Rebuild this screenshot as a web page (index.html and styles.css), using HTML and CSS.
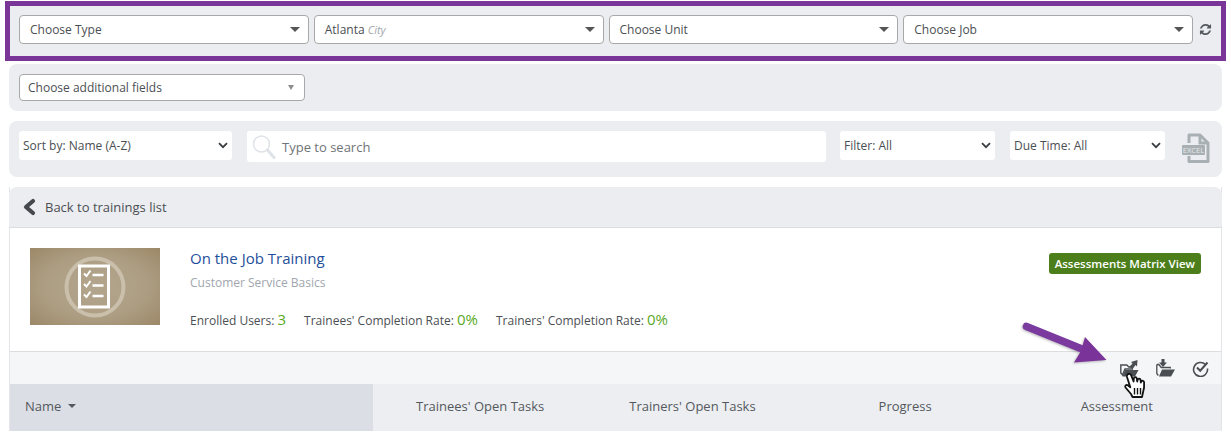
FILE: index.html
```html
<!DOCTYPE html>
<html lang="en">
<head>
<meta charset="utf-8">
<title>On the Job Training</title>
<link rel="stylesheet" href="styles.css">
</head>
<body>
<section class="filters">
  <div class="pick"><span>Choose Type</span><i class="caret"></i></div>
  <div class="pick"><span>Atlanta <em>City</em></span><i class="caret"></i></div>
  <div class="pick"><span>Choose Unit</span><i class="caret"></i></div>
  <div class="pick"><span>Choose Job</span><i class="caret"></i></div>
  <div class="refresh">
    <svg width="13" height="13" viewBox="0 0 1792 1792"><path fill="#555a5e" d="M1639 1056q0 5-1 7-64 268-268 434.5t-478 166.5q-146 0-282.5-55t-243.5-157l-129 129q-19 19-45 19t-45-19-19-45v-448q0-26 19-45t45-19h448q26 0 45 19t19 45-19 45l-137 137q71 66 161 102t187 36q134 0 250-65t186-179q11-17 53-117 8-23 30-23h192q13 0 22.5 9.5t9.5 22.5zm25-800v448q0 26-19 45t-45 19h-448q-26 0-45-19t-19-45 19-45l138-138q-148-137-349-137-134 0-250 65t-186 179q-11 17-53 117-8 23-30 23h-199q-13 0-22.5-9.5t-9.5-22.5v-7q65-268 270-434.5t480-166.5q146 0 284 55.5t245 156.5l130-129q19-19 45-19t45 19 19 45z"/></svg>
  </div>
</section>

<section class="panel extra">
  <div class="pick pick-small"><span>Choose additional fields</span><i class="caret caret-light"></i></div>
</section>

<section class="panel tools">
  <div class="drop drop-sort"><span>Sort by: Name (A-Z)</span><svg class="chev" width="10" height="7" viewBox="0 0 10 7"><path d="M1 1.2l4 4 4-4" fill="none" stroke="#3a3d40" stroke-width="1.8"/></svg></div>
  <div class="search">
    <svg width="24" height="26" viewBox="0 0 24 26"><circle cx="9.5" cy="10" r="8" fill="none" stroke="#dfe2e6" stroke-width="1.5"/><path d="M15.5 16l6.5 7.5" stroke="#dfe2e6" stroke-width="3" stroke-linecap="round"/></svg>
    <span>Type to search</span>
  </div>
  <div class="drop drop-filter"><span>Filter: All</span><svg class="chev" width="10" height="7" viewBox="0 0 10 7"><path d="M1 1.2l4 4 4-4" fill="none" stroke="#3a3d40" stroke-width="1.8"/></svg></div>
  <div class="drop drop-due"><span>Due Time: All</span><svg class="chev" width="10" height="7" viewBox="0 0 10 7"><path d="M1 1.2l4 4 4-4" fill="none" stroke="#3a3d40" stroke-width="1.8"/></svg></div>
  <div class="excel">
    <svg width="30" height="30" viewBox="0 0 30 30"><path d="M7 10V2h11l8 8v18.500H7V23" fill="none" stroke="#a9b0b3" stroke-width="3" stroke-linejoin="round"/><path d="M18 2v8h8" fill="none" stroke="#a9b0b3" stroke-width="3"/></svg>
    <b>EXCEL</b>
  </div>
</section>

<section class="card">
  <header class="back">
    <svg width="14" height="18" viewBox="0 0 14 18"><path d="M11 3L4 9l7 6" fill="none" stroke="#45494d" stroke-width="4.200" stroke-linecap="round" stroke-linejoin="round"/></svg>
    <span>Back to trainings list</span>
  </header>
  <div class="info">
    <div class="thumb">
      <svg width="64" height="64" viewBox="0 0 64 64">
        <circle cx="32" cy="32" r="28.500" fill="none" stroke="#c9bfab" stroke-width="4"/>
        <rect x="16.500" y="11" width="29" height="41" fill="none" stroke="#fff" stroke-width="3"/>
        <path d="M21 18.500l2.500 2.500 4-5.500M21 29l2.500 2.500 4-5.500M21 39.500l2.500 2.500 4-5.500" fill="none" stroke="#fff" stroke-width="2"/>
        <path d="M29.500 20h11M29.500 30.500h11M29.500 41h11" stroke="#fff" stroke-width="2.600"/>
      </svg>
    </div>
    <div class="meta">
      <h1>On the Job Training</h1>
      <p class="sub">Customer Service Basics</p>
      <p class="stats">
        <span class="first">Enrolled Users: <strong>3</strong></span>
        <span class="second">Trainees' Completion Rate: <strong>0%</strong></span>
        <span>Trainers' Completion Rate: <strong>0%</strong></span>
      </p>
    </div>
    <a class="matrix">Assessments Matrix View</a>
  </div>
  <div class="actions">
    <svg width="19" height="17" viewBox="0 0 19 17"><path d="M.8 5h6l2 2h3.500v2H5L2.500 15 .8 13z" fill="none" stroke="#4a4e52" stroke-width="1.400"/><path d="M5 10h13.500L15 16.500H2.500z" fill="#4a4e52"/><path d="M9 7l3.500-3.500L11 2l6.500-2-.5 6.500-1.500-1.500L13 8.500z" fill="#4a4e52"/></svg>
    <svg width="19" height="18" viewBox="0 0 19 18"><path d="M.8 5.500h2l2.500 3h9v1" fill="none" stroke="#4a4e52" stroke-width="1.300"/><path d="M.8 5.500v9l1.500 2" fill="none" stroke="#4a4e52" stroke-width="1.300"/><path d="M6 10.500h13L15 17.500H3z" fill="#4a4e52"/><path d="M5.500 0h3v3.500H11L7 8 3 3.500h2.500z" fill="#4a4e52"/></svg>
    <svg width="17" height="17" viewBox="0 0 17 17"><path d="M13.500 4.500A7 7 0 1 0 15.500 8.500" fill="none" stroke="#4a4e52" stroke-width="1.600"/><path d="M5 7.500l3.200 3.200L15.500 2.500" fill="none" stroke="#4a4e52" stroke-width="2"/></svg>
  </div>
  <div class="thead">
    <div class="th-name">Name <i class="sort"></i></div>
    <div class="th th1">Trainees' Open Tasks</div>
    <div class="th th2">Trainers' Open Tasks</div>
    <div class="th th3">Progress</div>
    <div class="th th4">Assessment</div>
  </div>
</section>

<svg class="arrow" width="90" height="46" viewBox="0 0 90 46"><path d="M4.500 4.500L60 27" stroke="#7a3a9e" stroke-width="7.500" stroke-linecap="round"/><path d="M63 15L84.500 38 52 40.500 59 29z" fill="#7a3398"/></svg>
<svg class="hand" width="26" height="27" viewBox="0 0 26 27"><path d="M4.500 2.500c1.300-1.300 3-.8 3.600.7l2.500 6.300.2-3c.2-1.800 2.800-1.800 3 0l.4 3 .4-1.800c.4-1.600 2.700-1.400 2.900.2l.3 2.600.5-1c.6-1.300 2.700-.9 2.800.7.200 3 .1 6.500-.9 9.300l-1.200 5.500H9.500L8 22 2.500 15.500c-1-1.500.8-3.200 2.300-2.200l2.500 1.900L4 5c-.2-1 0-1.900.5-2.500z" fill="#fff" stroke="#111" stroke-width="1.800" stroke-linejoin="round"/><path d="M11.500 16v6.500M14.500 16v6.500M17.500 16v6.500" stroke="#111" stroke-width="1.400"/></svg>
</body>
</html>
```
FILE: styles.css
```css
* { box-sizing: border-box; }
html, body { margin: 0; padding: 0; }
body {
  position: relative;
  width: 1231px;
  height: 438px;
  overflow: hidden;
  background: #fff;
  font-family: "Open Sans", "Liberation Sans", sans-serif;
  font-size: 12px;
  color: #45494d;
}
.filters {
  display: flex;
  gap: 5px;
  height: 60px;
  margin: 1px 5px 0;
  padding: 9px 0 0 9px;
  border: 5px solid #7a3598;
  background: #ecedf1;
}
.pick {
  display: flex;
  flex: 1 1 0;
  align-items: center;
  justify-content: space-between;
  height: 29px;
  padding: 0 8px 0 10px;
  border: 1px solid #a8a8a8;
  border-radius: 4px;
  background: #fff;
  color: #4b4f53;
}
.pick em { font-size: 11px; color: #a3a7ab; font-style: italic; }
.caret {
  width: 0;
  height: 0;
  border-left: 5px solid transparent;
  border-right: 5px solid transparent;
  border-top: 5px solid #555;
}
.caret-light { border-left-width: 3.500px; border-right-width: 3.500px; border-top-color: #8d8d8d; margin-right: 2px; }
.refresh { display: flex; flex: 0 0 23px; height: 29px; align-items: center; justify-content: flex-start; padding-left: 1px; }
.panel {
  display: flex;
  margin: 0 9px;
  border-radius: 8px;
  background: #ecedf1;
}
.extra { height: 47px; margin-top: 3px; padding: 10px; }
.pick-small { flex: 0 0 286px; height: 27px; padding: 0 8px; }
.tools { height: 56px; margin-top: 10px; padding: 10px 10px 0; align-items: flex-start; }
.drop {
  display: flex;
  align-items: center;
  justify-content: space-between;
  height: 29px;
  padding: 0 4px 0 4px;
  border-radius: 3px;
  background: #fff;
  color: #4b4f53;
}
.drop-sort { flex: 0 0 213px; }
.drop-filter { flex: 0 0 155px; margin-left: 14px; }
.drop-due { flex: 0 0 155px; margin-left: 15px; }
.search {
  display: flex;
  flex: 0 0 579px;
  align-items: center;
  gap: 6px;
  height: 31px;
  margin-left: 15px;
  padding-left: 5px;
  border-radius: 3px;
  background: #fff;
  font-size: 13px;
  color: #6f7478;
}
.excel { position: relative; width: 30px; height: 30px; margin: 2px 0 0 17px; }
.excel svg { display: block; }
.excel b {
  position: absolute;
  left: 0;
  top: 12px;
  width: 23px;
  border-radius: 1px;
  background: #a9b0b3;
  color: #e4e7e9;
  font-size: 7.500px;
  line-height: 10px;
  font-weight: 400;
  text-align: center;
}
.card {
  margin: 10px 9px 0;
  border-right: 1px solid #e4e5e8;
  border-left: 1px solid #e4e5e8;
}
.back {
  display: flex;
  align-items: center;
  gap: 9px;
  height: 41px;
  margin-left: -1px;
  margin-right: -1px;
  padding-left: 13px;
  border-bottom: 1px solid #dcdde1;
  border-radius: 8px 8px 0 0;
  background: #ecedf1;
  font-size: 13px;
  color: #4b4f53;
}
.info {
  position: relative;
  display: flex;
  height: 124px;
  padding: 20px 20px 0;
  border-bottom: 1px solid #dcdde1;
  background: #fff;
}
.thumb {
  display: flex;
  flex: 0 0 130px;
  align-items: center;
  justify-content: center;
  height: 77px;
  background: radial-gradient(ellipse at center, #b3a68e 0%, #ad9e83 55%, #9c8868 100%);
}
.meta { margin-left: 30px; margin-top: -1px; }
.meta h1 { margin: 0; font-size: 15px; font-weight: 400; line-height: 22px; color: #1f4f9a; }
.sub { margin: 5px 0 0; font-size: 12px; line-height: 18px; color: #a0a6ad; }
.stats { display: flex; align-items: baseline; margin: 17px 0 0; font-size: 12px; line-height: 20px; color: #4b4f53; }
.stats strong { font-size: 15px; font-weight: 400; color: #5aa91f; }
.stats .first { margin-right: 18px; }
.stats .second { margin-right: 18px; }
.matrix {
  position: absolute;
  top: 25px;
  right: 20px;
  height: 21px;
  padding: 0 6px;
  border-radius: 3px;
  background: #4c7f1c;
  color: #fff;
  font-size: 11.500px;
  font-weight: 600;
  line-height: 21px;
}
.actions {
  display: flex;
  align-items: center;
  justify-content: flex-end;
  gap: 17px;
  height: 32px;
  padding-right: 12px;
  background: #f5f6f8;
}
.thead {
  display: flex;
  align-items: center;
  height: 47px;
  padding-bottom: 4px;
  background: #eceef2;
  font-size: 13px;
  color: #55595d;
}
.th-name {
  display: flex;
  flex: 0 0 363px;
  align-items: center;
  gap: 7px;
  height: 47px;
  margin-bottom: -4px;
  padding: 0 0 4px 15px;
  background: #dcdee6;
}
.sort { width: 0; height: 0; border-left: 4px solid transparent; border-right: 4px solid transparent; border-top: 4px solid #55595d; }
.th { flex: 0 0 auto; }
.th1 { margin-left: 43px; }
.th2 { margin-left: 85px; }
.th3 { margin-left: 123px; }
.th4 { margin-left: 149px; }
.arrow { position: absolute; left: 1022px; top: 322px; filter: drop-shadow(-1px 1px 1px rgba(0,0,0,.25)); }
.hand { position: absolute; left: 1123px; top: 372px; }
```
